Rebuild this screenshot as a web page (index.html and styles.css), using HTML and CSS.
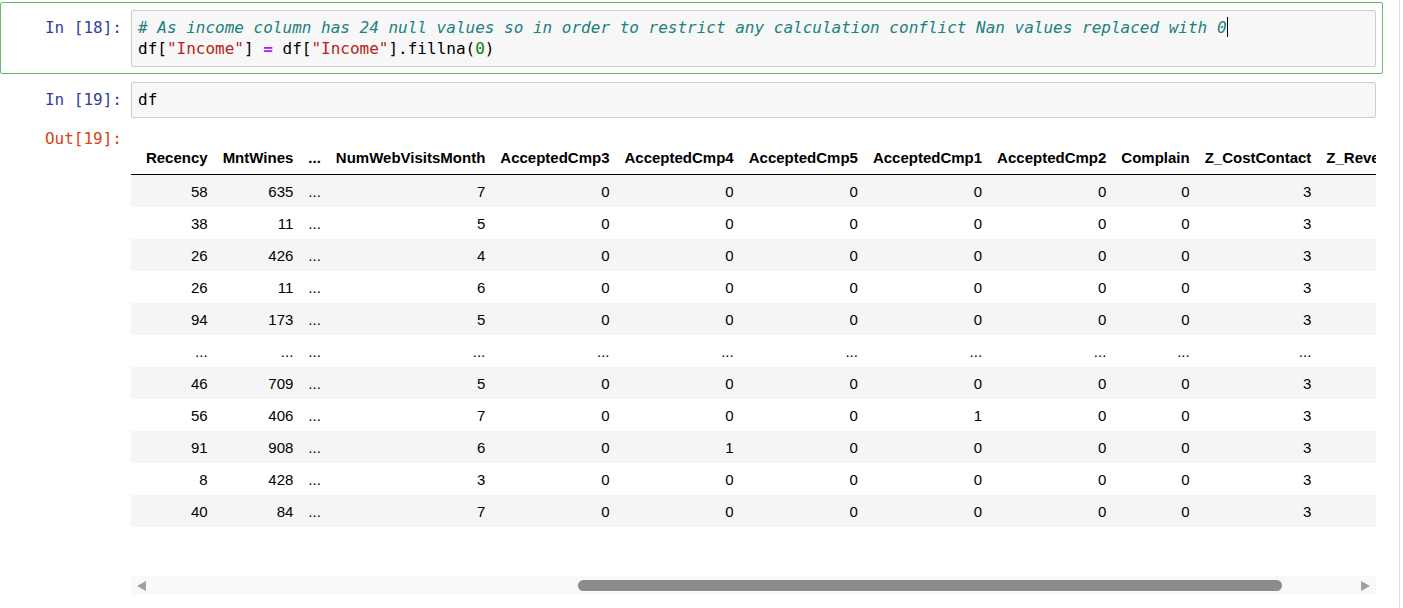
FILE: index.html
```html
<!DOCTYPE html>
<html lang="en">
<head>
<meta charset="utf-8">
<title>Notebook</title>
<link rel="stylesheet" href="styles.css">
</head>
<body>
<div class="notebook">
  <div class="cell selected">
    <div class="prompt in-prompt">In&nbsp;[18]:</div>
    <div class="input-area">
      <div class="code-line"><span class="cm-comment"># As income column has 24 null values so in order to restrict any calculation conflict Nan values replaced with 0</span><span class="cursor"></span></div>
      <div class="code-line">df[<span class="cm-string">"Income"</span>] <span class="cm-operator">=</span> df[<span class="cm-string">"Income"</span>].fillna(<span class="cm-number">0</span>)</div>
    </div>
  </div>

  <div class="cell">
    <div class="input-row">
      <div class="prompt in-prompt">In&nbsp;[19]:</div>
      <div class="input-area">
        <div class="code-line">df</div>
      </div>
    </div>
    <div class="output-row">
      <div class="prompt out-prompt">Out[19]:</div>
      <div class="output-subarea">
        <div class="table-scroll">
          <table class="df">
            <thead>
              <tr>
                <th></th><th>ID</th><th>Year_Birth</th><th>Education</th><th>Marital_Status</th><th>Income</th><th>Kidhome</th><th>Teenhome</th><th>Dt_Customer</th><th class="anchor">Recency</th><th>MntWines</th><th>...</th><th>NumWebVisitsMonth</th><th>AcceptedCmp3</th><th>AcceptedCmp4</th><th>AcceptedCmp5</th><th>AcceptedCmp1</th><th>AcceptedCmp2</th><th>Complain</th><th>Z_CostContact</th><th>Z_Revenue</th><th>Response</th>
              </tr>
            </thead>
            <tbody>
              <tr><th>0</th><td>5524</td><td>1957</td><td>Graduation</td><td>Single</td><td>58138.0</td><td>0</td><td>0</td><td>04-09-2012</td><td>58</td><td>635</td><td>...</td><td>7</td><td>0</td><td>0</td><td>0</td><td>0</td><td>0</td><td>0</td><td>3</td><td>11</td><td>1</td></tr>
              <tr><th>1</th><td>2174</td><td>1954</td><td>Graduation</td><td>Single</td><td>46344.0</td><td>1</td><td>1</td><td>08-03-2014</td><td>38</td><td>11</td><td>...</td><td>5</td><td>0</td><td>0</td><td>0</td><td>0</td><td>0</td><td>0</td><td>3</td><td>11</td><td>0</td></tr>
              <tr><th>2</th><td>4141</td><td>1965</td><td>Graduation</td><td>Together</td><td>71613.0</td><td>0</td><td>0</td><td>21-08-2013</td><td>26</td><td>426</td><td>...</td><td>4</td><td>0</td><td>0</td><td>0</td><td>0</td><td>0</td><td>0</td><td>3</td><td>11</td><td>0</td></tr>
              <tr><th>3</th><td>6182</td><td>1984</td><td>Graduation</td><td>Together</td><td>26646.0</td><td>1</td><td>0</td><td>10-02-2014</td><td>26</td><td>11</td><td>...</td><td>6</td><td>0</td><td>0</td><td>0</td><td>0</td><td>0</td><td>0</td><td>3</td><td>11</td><td>0</td></tr>
              <tr><th>4</th><td>5324</td><td>1981</td><td>PhD</td><td>Married</td><td>58293.0</td><td>1</td><td>0</td><td>19-01-2014</td><td>94</td><td>173</td><td>...</td><td>5</td><td>0</td><td>0</td><td>0</td><td>0</td><td>0</td><td>0</td><td>3</td><td>11</td><td>0</td></tr>
              <tr><th>...</th><td>...</td><td>...</td><td>...</td><td>...</td><td>...</td><td>...</td><td>...</td><td>...</td><td>...</td><td>...</td><td>...</td><td>...</td><td>...</td><td>...</td><td>...</td><td>...</td><td>...</td><td>...</td><td>...</td><td>...</td><td>...</td></tr>
              <tr><th>2235</th><td>10870</td><td>1967</td><td>Graduation</td><td>Married</td><td>61223.0</td><td>0</td><td>1</td><td>13-06-2013</td><td>46</td><td>709</td><td>...</td><td>5</td><td>0</td><td>0</td><td>0</td><td>0</td><td>0</td><td>0</td><td>3</td><td>11</td><td>0</td></tr>
              <tr><th>2236</th><td>4001</td><td>1946</td><td>PhD</td><td>Together</td><td>64014.0</td><td>2</td><td>1</td><td>10-06-2014</td><td>56</td><td>406</td><td>...</td><td>7</td><td>0</td><td>0</td><td>0</td><td>1</td><td>0</td><td>0</td><td>3</td><td>11</td><td>0</td></tr>
              <tr><th>2237</th><td>7270</td><td>1981</td><td>Graduation</td><td>Divorced</td><td>56981.0</td><td>0</td><td>0</td><td>25-01-2014</td><td>91</td><td>908</td><td>...</td><td>6</td><td>0</td><td>1</td><td>0</td><td>0</td><td>0</td><td>0</td><td>3</td><td>11</td><td>0</td></tr>
              <tr><th>2238</th><td>8235</td><td>1956</td><td>Master</td><td>Together</td><td>69245.0</td><td>0</td><td>1</td><td>24-01-2014</td><td>8</td><td>428</td><td>...</td><td>3</td><td>0</td><td>0</td><td>0</td><td>0</td><td>0</td><td>0</td><td>3</td><td>11</td><td>0</td></tr>
              <tr><th>2239</th><td>9405</td><td>1954</td><td>PhD</td><td>Married</td><td>52869.0</td><td>1</td><td>1</td><td>15-10-2012</td><td>40</td><td>84</td><td>...</td><td>7</td><td>0</td><td>0</td><td>0</td><td>0</td><td>0</td><td>0</td><td>3</td><td>11</td><td>1</td></tr>
            </tbody>
          </table>
        </div>
        <div class="hscroll">
          <svg class="arrow" width="9" height="10" viewBox="0 0 9 10"><polygon points="9,0 9,10 0,5" fill="#a0a0a0"/></svg>
          <div class="thumb"></div>
          <svg class="arrow arrow-right" width="9" height="10" viewBox="0 0 9 10"><polygon points="0,0 0,10 9,5" fill="#a0a0a0"/></svg>
        </div>
      </div>
    </div>
  </div>
</div>
<script src="script.js"></script>
</body>
</html>
```

FILE: styles.css
```css
html, body {
  margin: 0;
  padding: 0;
  background: #fff;
}

.notebook {
  box-sizing: border-box;
  width: 1400px;
  min-height: 100vh;
  padding-top: 2px;
  padding-right: 16px;
  border-right: 1px solid #e0e0e0;
}

.cell {
  display: flex;
  flex-direction: column;
  border: 1px solid transparent;
  border-radius: 2px;
  padding: 7px 6px 6px 0;
}

.cell.selected {
  flex-direction: row;
  border-color: #66bb6a;
}

.input-row,
.output-row {
  display: flex;
  flex-direction: row;
}

.prompt {
  flex: 0 0 130px;
  box-sizing: border-box;
  padding: 7px 9px 0 0;
  text-align: right;
  font-family: "DejaVu Sans Mono", "Liberation Mono", monospace;
  font-size: 16px;
  line-height: 21px;
  white-space: nowrap;
}

.in-prompt {
  color: #303f9f;
}

.out-prompt {
  color: #d84315;
  padding-top: 10px;
}

.input-area {
  flex: 1 1 auto;
  min-width: 0;
  background: #f7f7f7;
  border: 1px solid #cfcfcf;
  border-radius: 2px;
  padding: 6px 6px 7px 6px;
  font-family: "DejaVu Sans Mono", "Liberation Mono", monospace;
  font-size: 16px;
  line-height: 21px;
  color: #000;
}

.code-line {
  white-space: pre;
  height: 21px;
}

.cm-comment {
  color: #208080;
  font-style: italic;
}

.cm-string {
  color: #ba2121;
}

.cm-operator {
  color: #aa22ff;
  font-weight: bold;
}

.cm-number {
  color: #008800;
}

.cursor {
  display: inline-block;
  width: 0;
  height: 20px;
  border-left: 1px solid #000;
  vertical-align: top;
}

.output-subarea {
  flex: 1 1 auto;
  min-width: 0;
  display: flex;
  flex-direction: column;
}

.table-scroll {
  overflow: hidden;
  padding-top: 23px;
  padding-bottom: 49px;
}

.df {
  border-collapse: collapse;
  border-spacing: 0;
  font-family: "Liberation Sans", Arial, sans-serif;
  font-size: 15px;
  color: #000;
}

.df th,
.df td {
  padding: 7.5px;
  text-align: right;
  vertical-align: middle;
  line-height: 17px;
  white-space: nowrap;
  border: none;
}

.df th {
  font-weight: bold;
}

.df thead th {
  padding-bottom: 8.5px;
  border-bottom: 1px solid #000;
  vertical-align: bottom;
}

.df tbody tr:nth-child(odd) {
  background: #f5f5f5;
}

.hscroll {
  display: flex;
  align-items: center;
  height: 19px;
  background: #f9f9f9;
  padding: 0 6px;
}

.arrow {
  flex: 0 0 auto;
  display: block;
}

.thumb {
  flex: 0 0 704px;
  height: 11px;
  margin-left: 432px;
  border-radius: 6px;
  background: #8b8b8b;
}

.arrow-right {
  margin-left: auto;
}
```

FILE: script.js
```js
(function () {
  var wrap = document.querySelector('.table-scroll');
  var anchor = document.querySelector('.df th.anchor');
  if (!wrap || !anchor) return;
  var offset = anchor.getBoundingClientRect().left - wrap.getBoundingClientRect().left;
  wrap.scrollLeft = Math.round(offset - 7.5);
})();
```
